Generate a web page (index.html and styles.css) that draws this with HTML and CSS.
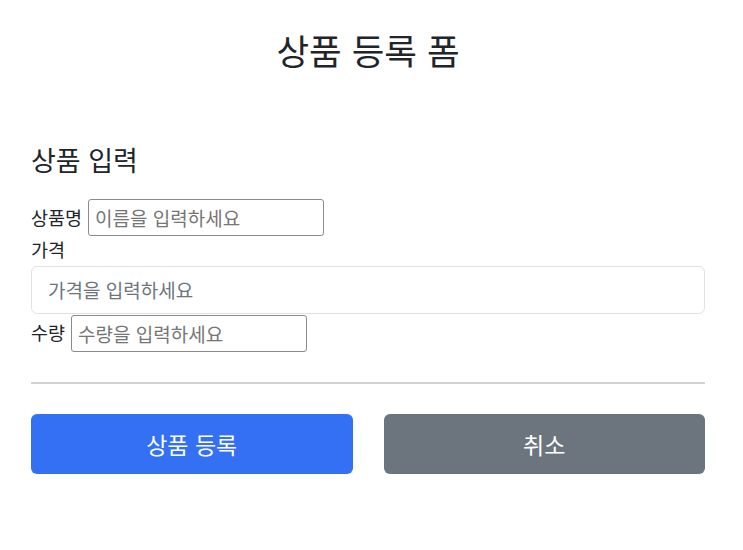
FILE: index.html
```html
<!DOCTYPE html>
<html lang="ko">
<head>
    <meta charset="UTF-8">
    <meta name="viewport" content="width=device-width, initial-scale=1.0">
    <title>상품 등록 폼</title>
    <link rel="stylesheet" href="styles.css">
</head>
<body>
    <div class="container">
        <div class="py-5 text-center">
            <h2>상품 등록 폼</h2>
        </div>
        <h4 class="section-title">상품 입력</h4>
        <form action="item.html" method="post">
            <div class="field-inline">
                <label for="itemName">상품명</label>
                <input type="text" id="itemName" name="itemName" class="plain-input" placeholder="이름을 입력하세요">
            </div>
            <div class="field-block">
                <label for="price">가격</label>
                <input type="text" id="price" name="price" class="form-control" placeholder="가격을 입력하세요">
            </div>
            <div class="field-inline">
                <label for="quantity">수량</label>
                <input type="text" id="quantity" name="quantity" class="plain-input" placeholder="수량을 입력하세요">
            </div>
            <hr class="divider">
            <div class="button-row">
                <button class="btn btn-primary" type="submit">상품 등록</button>
                <button class="btn btn-secondary" type="button" onclick="location.href='items.html'">취소</button>
            </div>
        </form>
    </div>
</body>
</html>
```

FILE: styles.css
```css
body {
    margin: 0;
    font-family: "Noto Sans CJK KR", "Noto Sans", sans-serif;
    font-size: 18.5px;
    line-height: 1.4;
    color: #212529;
    background-color: #fff;
}
.container {
    padding: 0 38px 0 31px;
}
.text-center {
    text-align: center;
}
.py-5 {
    padding-top: 29px;
}
h2 {
    margin: 0;
    font-size: 35.5px;
    font-weight: 400;
    line-height: 1.2;
}
.section-title {
    margin: 72px 0 0 0;
    font-size: 27px;
    font-weight: 400;
    line-height: 1.2;
}
form {
    margin-top: 23px;
}
.field-inline {
    display: flex;
    align-items: center;
    gap: 6px;
}
.field-block label {
    display: block;
    margin-top: 1px;
    margin-bottom: 3px;
}
.plain-input {
    box-sizing: border-box;
    width: 236px;
    height: 37px;
    padding: 1px 6px;
    font-family: inherit;
    font-size: 19px;
    color: #212529;
    border: 1px solid #8a8a8a;
    border-radius: 3px;
}
.plain-input::placeholder {
    color: #757575;
}
.form-control {
    box-sizing: border-box;
    display: block;
    width: 100%;
    height: 48px;
    margin-bottom: 1px;
    padding: 6px 16px;
    font-family: inherit;
    font-size: 19px;
    color: #212529;
    border: 1px solid #dee2e6;
    border-radius: 6px;
}
.form-control::placeholder {
    color: #6c757d;
}
.divider {
    margin: 30px 0 30px 0;
    border: 0;
    border-top: 2px solid #d2d2d2;
}
.button-row {
    display: grid;
    grid-template-columns: 1fr 1fr;
    gap: 31px;
}
.btn {
    height: 60px;
    font-family: inherit;
    font-size: 23px;
    color: #fff;
    border: none;
    border-radius: 6px;
    cursor: pointer;
}
.btn-primary {
    background-color: #3370f4;
}
.btn-secondary {
    background-color: #6c757d;
}
```
